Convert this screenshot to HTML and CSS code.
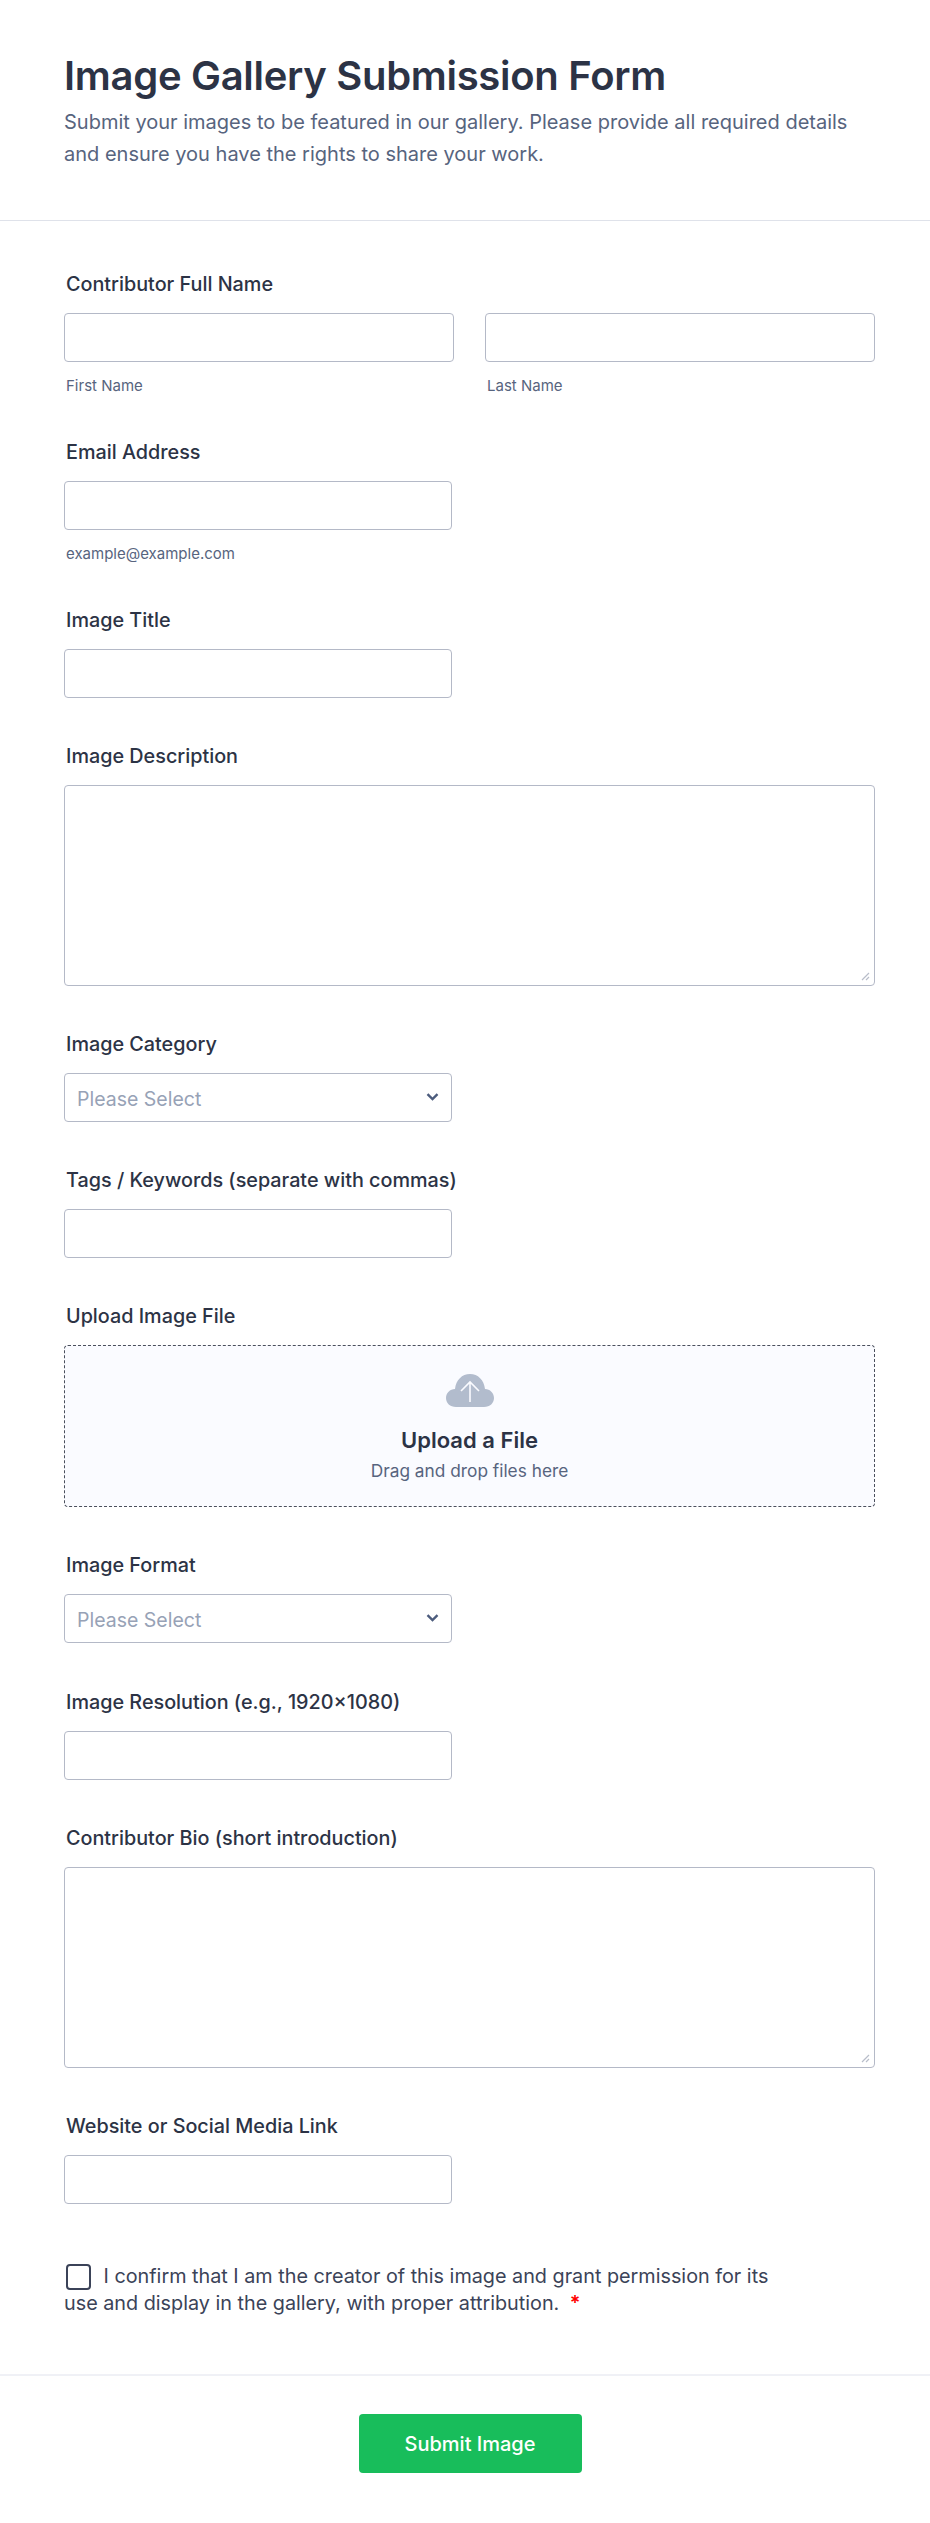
FILE: index.html
```html
<!DOCTYPE html>
<html lang="en">
<head>
<meta charset="UTF-8">
<meta name="viewport" content="width=device-width, initial-scale=1.0">
<title>Image Gallery Submission Form</title>
<link rel="stylesheet" href="styles.css">
</head>
<body>
<form class="form">
  <header class="form-header">
    <h1>Image Gallery Submission Form</h1>
    <p>Submit your images to be featured in our gallery. Please provide all required details and ensure you have the rights to share your work.</p>
  </header>

  <div class="fields">
    <div class="field">
      <label class="field-label">Contributor Full Name</label>
      <div class="name-row">
        <div>
          <input class="text-input wide" type="text">
          <span class="sublabel">First Name</span>
        </div>
        <div>
          <input class="text-input wide" type="text">
          <span class="sublabel">Last Name</span>
        </div>
      </div>
    </div>

    <div class="field">
      <label class="field-label">Email Address</label>
      <input class="text-input" type="email">
      <span class="sublabel">example@example.com</span>
    </div>

    <div class="field">
      <label class="field-label">Image Title</label>
      <input class="text-input" type="text">
    </div>

    <div class="field">
      <label class="field-label">Image Description</label>
      <div class="area-wrap">
        <textarea class="text-area"></textarea>
        <svg class="grip" width="9" height="9" viewBox="0 0 9 9"><path d="M1 8 8 1M5 8l3-3" fill="none" stroke="#b8bdc9" stroke-width="1.2"/></svg>
      </div>
    </div>

    <div class="field">
      <label class="field-label">Image Category</label>
      <div class="select-wrap">
        <select class="select-input"><option>Please Select</option></select>
        <svg class="chevron" width="13" height="8" viewBox="0 0 13 8"><path d="M1.5 1.2 6.500 6l5-4.800" fill="none" stroke="#4c5c7d" stroke-width="2.4"/></svg>
      </div>
    </div>

    <div class="field">
      <label class="field-label">Tags / Keywords (separate with commas)</label>
      <input class="text-input" type="text">
    </div>

    <div class="field">
      <label class="field-label">Upload Image File</label>
      <div class="upload">
        <svg class="upload-icon" width="48" height="33" viewBox="0 0 48 33">
          <path d="M10 33C4 33 0 29 0 24c0-5 4-9 9-9 1-9 7-15 15-15s14 6 15 15c5 0 9 4 9 9s-4 9-10 9z" fill="#b2bccd"/>
          <path d="M24 28V8M15 17l9-9 9 9" fill="none" stroke="#fafbff" stroke-width="1.6"/>
        </svg>
        <strong>Upload a File</strong>
        <span>Drag and drop files here</span>
      </div>
    </div>

    <div class="field">
      <label class="field-label">Image Format</label>
      <div class="select-wrap">
        <select class="select-input"><option>Please Select</option></select>
        <svg class="chevron" width="13" height="8" viewBox="0 0 13 8"><path d="M1.5 1.2 6.500 6l5-4.800" fill="none" stroke="#4c5c7d" stroke-width="2.4"/></svg>
      </div>
    </div>

    <div class="field">
      <label class="field-label">Image Resolution (e.g., 1920×1080)</label>
      <input class="text-input" type="text">
    </div>

    <div class="field">
      <label class="field-label">Contributor Bio (short introduction)</label>
      <div class="area-wrap">
        <textarea class="text-area"></textarea>
        <svg class="grip" width="9" height="9" viewBox="0 0 9 9"><path d="M1 8 8 1M5 8l3-3" fill="none" stroke="#b8bdc9" stroke-width="1.2"/></svg>
      </div>
    </div>

    <div class="field">
      <label class="field-label">Website or Social Media Link</label>
      <input class="text-input" type="url">
    </div>

    <label class="confirm">
      <input class="checkbox" type="checkbox">
      I confirm that I am the creator of this image and grant permission for its use and display in the gallery, with proper attribution. <span class="required">*</span>
    </label>
  </div>

  <div class="form-footer">
    <button class="submit" type="button">Submit Image</button>
  </div>
</form>
</body>
</html>
```

FILE: styles.css
```css
* {
  box-sizing: border-box;
}

body {
  margin: 0;
  background-color: #fff;
  color: #2c3345;
  font-family: Inter, "Liberation Sans", sans-serif;
}

.form-header {
  height: 221px;
  padding: 52px 64px 0;
  border-bottom: 1px solid #dfe2ea;
}

.form-header h1 {
  margin: 0;
  font-size: 40px;
  line-height: 48px;
  font-weight: 600;
  letter-spacing: -0.3px;
}

.form-header p {
  margin: 6px 0 0;
  font-size: 20px;
  line-height: 32px;
  color: #57647e;
}

.fields {
  padding: 51.8px 55px 0 64px;
}

.field {
  margin-bottom: 47.1px;
}

.field-label {
  display: block;
  margin: 0 0 18px 2px;
  font-size: 19.8px;
  line-height: 22px;
  font-weight: 500;
}

.name-row {
  display: grid;
  grid-template-columns: 390px 390px;
  gap: 31px;
}

.text-input,
.select-input {
  display: block;
  width: 388px;
  height: 49px;
  border: 1px solid #b4b9c7;
  border-radius: 4px;
  background-color: #fff;
}

.text-input.wide {
  width: 390px;
}

.area-wrap {
  position: relative;
  width: 811px;
}

.text-area {
  display: block;
  width: 100%;
  height: 201px;
  border: 1px solid #b4b9c7;
  border-radius: 4px;
  resize: none;
}

.grip {
  position: absolute;
  right: 5px;
  bottom: 5px;
}

.sublabel {
  display: block;
  margin: 15px 0 0 2px;
  font-size: 15px;
  line-height: 17px;
  color: #57647e;
}

.select-wrap {
  position: relative;
  width: 388px;
}

.select-input {
  padding: 2px 12px 0;
  appearance: none;
  font-family: inherit;
  font-size: 19.5px;
  color: #97a2b6;
}

.chevron {
  position: absolute;
  top: 20px;
  right: 13px;
}

.upload {
  display: flex;
  flex-direction: column;
  align-items: center;
  width: 811px;
  height: 162px;
  padding-top: 28px;
  border: 1px dashed #4a4f5c;
  border-radius: 4px;
  background-color: #fafbff;
}

.upload strong {
  margin-top: 20px;
  font-size: 22px;
  line-height: 26px;
  font-weight: 600;
}

.upload span {
  margin-top: 6px;
  font-size: 17.3px;
  line-height: 24px;
  color: #57647e;
}

.confirm {
  display: block;
  width: 720px;
  margin-top: 59px;
  font-size: 19.8px;
  line-height: 27px;
  color: #3b4358;
}

.checkbox {
  width: 25px;
  height: 26px;
  margin: 0 7px 0 2px;
  appearance: none;
  vertical-align: middle;
  border: 2px solid #3b4358;
  border-radius: 4px;
  background-color: #fff;
}

.required {
  margin-left: 5px;
  color: #f00;
  font-weight: 600;
}

.form-footer {
  margin-top: 57px;
  height: 147px;
  padding: 38px 0 0 10px;
  border-top: 2px solid #f0f1f6;
  text-align: center;
}

.submit {
  width: 223px;
  height: 59px;
  border: 0;
  border-radius: 4px;
  background-color: #18bd5b;
  color: #fff;
  font-family: inherit;
  font-size: 20px;
  font-weight: 500;
}
```
